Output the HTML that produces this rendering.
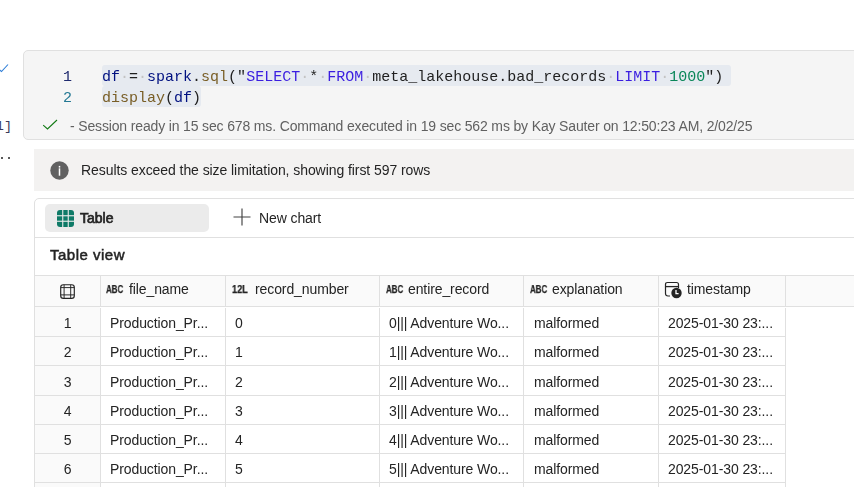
<!DOCTYPE html>
<html><head><meta charset="utf-8">
<style>
html,body{margin:0;padding:0;width:854px;height:487px;overflow:hidden;background:#fff;position:relative;font-family:"Liberation Sans",sans-serif;}
.abs{position:absolute;}
.cell,.t14,#status,#bannertxt,.ln,.typ{will-change:transform;}
.mono{font-family:"Liberation Mono",monospace;}
#cell{left:23px;top:50px;width:900px;height:90px;background:#f5f5f5;border:1px solid #e0e0e0;border-radius:5px;box-sizing:border-box;}
.ln{position:absolute;font-size:15px;line-height:20px;white-space:pre;}
.hl{background:#e6eaf0;border-radius:3px;}
.num{color:#1f2a6e;}
.n2{color:#237893;}
.v{color:#001080;}
.f{color:#795e26;}
.k{color:#3b1ee0;}
.g{color:#098658;}
.p{color:#1f1f1f;}
.ws{color:#c3c3c3;}
#status{left:69.8px;top:117.7px;font-size:14px;letter-spacing:-0.15px;color:#616161;white-space:nowrap;line-height:16px;}
#banner{left:34px;top:149px;width:830px;height:42px;background:#f3f2f1;}
#bannertxt{left:81px;top:162px;font-size:14px;letter-spacing:-0.07px;color:#242424;white-space:nowrap;line-height:16px;}
#tbl{left:34px;top:198px;width:900px;height:400px;border:1px solid #e0e0e0;border-radius:5px;box-sizing:border-box;}
#tabpill{left:45px;top:204px;width:164px;height:28px;background:#ebebeb;border-radius:5px;}
.t14{font-size:14px;letter-spacing:-0.1px;white-space:nowrap;line-height:16px;color:#242424;}
.hline{position:absolute;height:1px;background:#e0e0e0;}
.vline{position:absolute;width:1px;background:#e0e0e0;}
.cell{position:absolute;font-size:14px;letter-spacing:-0.1px;line-height:16px;white-space:nowrap;color:#242424;}
.typ{position:absolute;font-size:10.2px;font-weight:bold;line-height:10px;transform-origin:0 0;transform:scaleX(0.78);-webkit-text-stroke:0.25px #242424;color:#242424;white-space:nowrap;}
</style></head><body>

<!-- gutter -->
<svg class="abs" style="left:0;top:62px" width="10" height="12" viewBox="0 0 10 12"><path d="M-1 7.5 L1.5 9.5 L8 2.5" fill="none" stroke="#2f7fd8" stroke-width="1.1"/></svg>
<div class="abs mono" style="left:-4.2px;top:118.8px;font-size:13.5px;line-height:16px;color:#3a3a5a;">1]</div>
<div class="abs" style="left:0.8px;top:156.7px;width:2.3px;height:2.3px;background:#222;border-radius:50%"></div>
<div class="abs" style="left:7.95px;top:156.7px;width:2.3px;height:2.3px;background:#222;border-radius:50%"></div>

<div id="cell" class="abs"></div>
<div class="ln num mono" style="left:63px;top:68px">1</div>
<div class="ln n2 mono" style="left:63px;top:88.5px">2</div>
<div class="ln mono hl" style="left:102px;top:65px;height:21px;line-height:25px;padding-right:8px"><span class="v">df</span><span class="ws">·</span><span class="p">=</span><span class="ws">·</span><span class="v">spark</span><span class="p">.</span><span class="f">sql</span><span class="p">("</span><span class="k">SELECT</span><span class="ws">·</span><span class="p">*</span><span class="ws">·</span><span class="k">FROM</span><span class="ws">·</span><span class="p">meta_lakehouse.bad_records</span><span class="ws">·</span><span class="k">LIMIT</span><span class="ws">·</span><span class="g">1000</span><span class="p">")</span></div>
<div class="ln mono hl" style="left:102px;top:86px;height:20.5px;line-height:25px"><span class="f">display</span><span class="p">(</span><span class="v">df</span><span class="p">)</span></div>

<svg class="abs" style="left:41px;top:118px" width="18" height="14" viewBox="0 0 18 14"><path d="M2.2 7.1 L6.5 10.9 L16 2" fill="none" stroke="#127a14" stroke-width="1.1"/></svg>
<div id="status" class="abs">- Session ready in 15 sec 678 ms. Command executed in 19 sec 562 ms by Kay Sauter on 12:50:23 AM, 2/02/25</div>

<div id="banner" class="abs"></div>
<svg class="abs" style="left:50px;top:161px" width="19" height="19" viewBox="0 0 19 19"><circle cx="9.5" cy="9.5" r="9.2" fill="#616161"/><rect x="8.75" y="7.3" width="1.5" height="7.4" fill="#fff"/><rect x="8.75" y="4.9" width="1.5" height="1.7" fill="#fff"/></svg>
<div id="bannertxt" class="abs">Results exceed the size limitation, showing first 597 rows</div>

<div id="tbl" class="abs"></div>
<div id="tabpill" class="abs"></div>
<svg class="abs" style="left:57.3px;top:209.8px" width="17" height="17" viewBox="0 0 17 17"><rect x="0" y="0" width="17" height="17" rx="3" fill="#0e7a67"/><rect x="5.2" y="0" width="1.1" height="17" fill="#ebebeb"/><rect x="10.7" y="0" width="1.1" height="17" fill="#ebebeb"/><rect x="0" y="5.2" width="17" height="1.1" fill="#ebebeb"/><rect x="0" y="10.7" width="17" height="1.1" fill="#ebebeb"/></svg>
<div class="abs t14" style="left:80px;top:210px;letter-spacing:0;-webkit-text-stroke:0.7px #242424;">Table</div>
<svg class="abs" style="left:233px;top:208px" width="18" height="18" viewBox="0 0 18 18"><path d="M9 0.5 V17.5 M0.5 9 H17.5" stroke="#424242" stroke-width="1.15" fill="none"/></svg>
<div class="abs t14" style="left:258.5px;top:210px;">New chart</div>
<div class="hline" style="left:35px;top:237px;width:830px"></div>

<div class="abs t14" style="left:50px;top:246px;font-size:15px;letter-spacing:0.5px;line-height:18px;-webkit-text-stroke:0.5px #242424;color:#242424">Table view</div>

<!-- table header -->
<div class="abs" style="left:35px;top:276px;width:830px;height:30px;background:#fafafa"></div>
<div class="hline" style="left:35px;top:275px;width:830px"></div>
<div class="hline" style="left:35px;top:306px;width:830px"></div>
<div class="abs" style="left:35px;top:307px;width:65px;height:200px;background:#fafafa"></div>

<!-- header icons -->
<svg class="abs" style="left:60px;top:284px" width="15" height="15" viewBox="0 0 15 15"><rect x="0.7" y="0.7" width="13.6" height="13.6" rx="2.6" fill="none" stroke="#242424" stroke-width="1.15"/><path d="M4.1 0.8 V14.2 M10.7 0.8 V14.2 M0.8 3.6 H14.2 M0.8 10.9 H14.2" stroke="#242424" stroke-width="0.95"/></svg>
<div class="typ" style="left:105.5px;top:285px">ABC</div>
<div class="cell" style="left:129px;top:280.75px">file_name</div>
<div class="typ" style="left:231.5px;top:283.5px;font-size:11.5px;transform:scaleX(0.8)">12L</div>
<div class="cell" style="left:255px;top:280.75px">record_number</div>
<div class="typ" style="left:385.5px;top:285px">ABC</div>
<div class="cell" style="left:408px;top:280.75px">entire_record</div>
<div class="typ" style="left:529.5px;top:285px">ABC</div>
<div class="cell" style="left:552px;top:280.75px">explanation</div>
<svg class="abs" style="left:664.4px;top:281px" width="20" height="18" viewBox="0 0 20 18"><path d="M6 15 H4 Q1.5 15 1.5 12.5 V3.5 Q1.5 1.5 3.5 1.5 H12.5 Q14.5 1.5 14.5 3.5 V7" fill="none" stroke="#242424" stroke-width="1.2"/><path d="M1.8 5.6 H14.5" stroke="#242424" stroke-width="1.3"/><circle cx="12.5" cy="12" r="5.2" fill="#242424"/><path d="M12 9 V12.6 H14.6" fill="none" stroke="#fff" stroke-width="1.3"/></svg>
<div class="cell" style="left:687px;top:280.75px">timestamp</div>
<div class="vline" style="left:100px;top:276px;height:31px"></div><div class="vline" style="left:100px;top:308px;height:180px"></div>
<div class="vline" style="left:225px;top:276px;height:31px"></div><div class="vline" style="left:225px;top:308px;height:180px"></div>
<div class="vline" style="left:379px;top:276px;height:31px"></div><div class="vline" style="left:379px;top:308px;height:180px"></div>
<div class="vline" style="left:523px;top:276px;height:31px"></div><div class="vline" style="left:523px;top:308px;height:180px"></div>
<div class="vline" style="left:658px;top:276px;height:31px"></div><div class="vline" style="left:658px;top:308px;height:180px"></div>
<div class="vline" style="left:785px;top:276px;height:31px"></div><div class="vline" style="left:785px;top:308px;height:180px"></div>
<div class="hline" style="left:35px;top:336px;width:751px"></div>
<div class="hline" style="left:35px;top:365px;width:751px"></div>
<div class="hline" style="left:35px;top:395px;width:751px"></div>
<div class="hline" style="left:35px;top:424px;width:751px"></div>
<div class="hline" style="left:35px;top:453px;width:751px"></div>
<div class="hline" style="left:35px;top:482px;width:751px"></div>
<div class="cell" style="left:35px;width:65px;text-align:center;top:315.25px">1</div>
<div class="cell" style="left:110px;top:315.25px">Production_Pr...</div>
<div class="cell" style="left:235px;top:315.25px">0</div>
<div class="cell" style="left:389px;top:315.25px">0||| Adventure Wo...</div>
<div class="cell" style="left:533.5px;top:315.25px">malformed</div>
<div class="cell" style="left:668px;top:315.25px">2025-01-30 23:...</div>
<div class="cell" style="left:35px;width:65px;text-align:center;top:344.25px">2</div>
<div class="cell" style="left:110px;top:344.25px">Production_Pr...</div>
<div class="cell" style="left:235px;top:344.25px">1</div>
<div class="cell" style="left:389px;top:344.25px">1||| Adventure Wo...</div>
<div class="cell" style="left:533.5px;top:344.25px">malformed</div>
<div class="cell" style="left:668px;top:344.25px">2025-01-30 23:...</div>
<div class="cell" style="left:35px;width:65px;text-align:center;top:373.75px">3</div>
<div class="cell" style="left:110px;top:373.75px">Production_Pr...</div>
<div class="cell" style="left:235px;top:373.75px">2</div>
<div class="cell" style="left:389px;top:373.75px">2||| Adventure Wo...</div>
<div class="cell" style="left:533.5px;top:373.75px">malformed</div>
<div class="cell" style="left:668px;top:373.75px">2025-01-30 23:...</div>
<div class="cell" style="left:35px;width:65px;text-align:center;top:403.25px">4</div>
<div class="cell" style="left:110px;top:403.25px">Production_Pr...</div>
<div class="cell" style="left:235px;top:403.25px">3</div>
<div class="cell" style="left:389px;top:403.25px">3||| Adventure Wo...</div>
<div class="cell" style="left:533.5px;top:403.25px">malformed</div>
<div class="cell" style="left:668px;top:403.25px">2025-01-30 23:...</div>
<div class="cell" style="left:35px;width:65px;text-align:center;top:432.25px">5</div>
<div class="cell" style="left:110px;top:432.25px">Production_Pr...</div>
<div class="cell" style="left:235px;top:432.25px">4</div>
<div class="cell" style="left:389px;top:432.25px">4||| Adventure Wo...</div>
<div class="cell" style="left:533.5px;top:432.25px">malformed</div>
<div class="cell" style="left:668px;top:432.25px">2025-01-30 23:...</div>
<div class="cell" style="left:35px;width:65px;text-align:center;top:461.25px">6</div>
<div class="cell" style="left:110px;top:461.25px">Production_Pr...</div>
<div class="cell" style="left:235px;top:461.25px">5</div>
<div class="cell" style="left:389px;top:461.25px">5||| Adventure Wo...</div>
<div class="cell" style="left:533.5px;top:461.25px">malformed</div>
<div class="cell" style="left:668px;top:461.25px">2025-01-30 23:...</div>
</body></html>
